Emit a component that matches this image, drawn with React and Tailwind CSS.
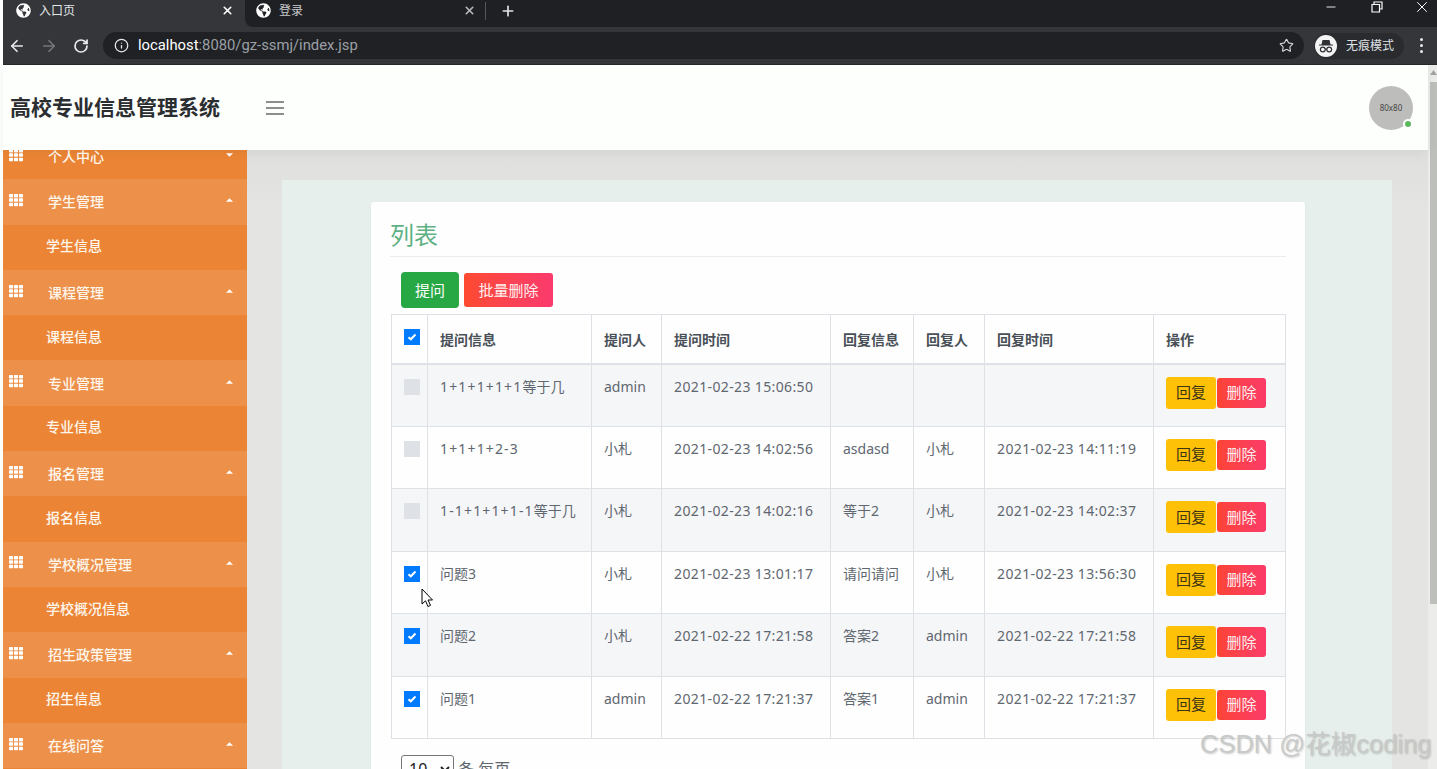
import React from 'react'
import { ArrowLeft, ArrowRight, RotateCw, Info, Star, X, Plus, Minus } from 'lucide-react'
import { FaGlobeAmericas, FaTh } from 'react-icons/fa'

const menus = [
    { title: "学生管理", child: "学生信息" },
    { title: "课程管理", child: "课程信息" },
    { title: "专业管理", child: "专业信息" },
    { title: "报名管理", child: "报名信息" },
    { title: "学校概况管理", child: "学校概况信息" },
    { title: "招生政策管理", child: "招生信息" },
    { title: "在线问答", child: "问答信息" },
]

const rows = [
    { checked: false, sum: "1+1+1+1+1", q: "等于几", by: "admin", time: "2021-02-23 15:06:50", a: "", ans: "", atime: "" },
    { checked: false, sum: "1+1+1+2-3", q: "", by: "小札", time: "2021-02-23 14:02:56", a: "asdasd", ans: "小札", atime: "2021-02-23 14:11:19" },
    { checked: false, sum: "1-1+1+1+1-1", q: "等于几", by: "小札", time: "2021-02-23 14:02:16", a: "等于2", ans: "小札", atime: "2021-02-23 14:02:37" },
    { checked: true, sum: "", q: "问题3", by: "小札", time: "2021-02-23 13:01:17", a: "请问请问", ans: "小札", atime: "2021-02-23 13:56:30" },
    { checked: true, sum: "", q: "问题2", by: "小札", time: "2021-02-22 17:21:58", a: "答案2", ans: "admin", atime: "2021-02-22 17:21:58" },
    { checked: true, sum: "", q: "问题1", by: "admin", time: "2021-02-22 17:21:37", a: "答案1", ans: "admin", atime: "2021-02-22 17:21:37" },
]

const Check = ({ checked }) => (
    <div className={`w-[16px] h-[16px] flex items-center justify-center ${checked ? "bg-[#007bff]" : "bg-[#dee2e6]"}`}>
        {checked ? (
            <svg width="10" height="8" viewBox="0 0 10 8">
                <path d="M1.5 4.2 L3.8 6.3 L8.5 1.5" fill="none" stroke="white" strokeWidth="2" />
            </svg>
        ) : null}
    </div>
)

const Caret = ({ down }) => (
    <svg width="7" height="4" viewBox="0 0 8 4" className="ml-auto mr-[14px] mb-[3px]">
        <polygon points={down ? "0,0 8,0 4,4" : "0,4 8,4 4,0"} fill="white" />
    </svg>
)

const MenuTitle = ({ title, light, down }) => (
    <div className={`h-[45.3px] flex items-center pl-[6px] text-[14px] font-medium text-[#fff6ec] ${light ? "bg-[#ec904a]" : "bg-[#eb8535]"}`}>
        <FaTh className="text-white text-[14px] w-[14px] mb-[4px]" />
        <span className="ml-[25px]">{title}</span>
        <Caret down={down} />
    </div>
)

const Sidebar = () => (
    <div className="w-[244px] shrink-0 overflow-hidden h-full">
        <div className="-mt-[16px]">
            <MenuTitle title="个人中心" down />
            {menus.map((m) => (
                <div key={m.title}>
                    <MenuTitle title={m.title} light />
                    <div className="h-[45.3px] flex items-center pl-[43px] pb-[3px] text-[14px] font-medium text-[#fff6ec] bg-[#eb8535]">{m.child}</div>
                </div>
            ))}
        </div>
    </div>
)

const Th = ({ children }) => (
    <th className="border border-[#dee2e6] border-b-[2px] px-[12px] pt-[2px] align-middle text-left text-[14px] font-bold text-[#495057]">{children}</th>
)

const Td = ({ children }) => (
    <td className="border border-[#dee2e6] px-[12px] pt-[11px] align-top text-[14px] text-[#5f6770] whitespace-nowrap">{children}</td>
)

const Time = ({ value }) => <span className="tracking-[0.37px]">{value}</span>

const Table = () => (
    <table className="table-fixed border-collapse w-[894px] ml-[1px]">
        <colgroup>
            <col className="w-[36px]" />
            <col className="w-[164px]" />
            <col className="w-[70px]" />
            <col className="w-[169px]" />
            <col className="w-[83px]" />
            <col className="w-[71px]" />
            <col className="w-[169px]" />
            <col className="w-[132px]" />
        </colgroup>
        <thead>
            <tr className="h-[49px]">
                <th className="border border-[#dee2e6] border-b-[2px] align-top pt-[14px] pl-[12px]"><Check checked /></th>
                <Th>提问信息</Th>
                <Th>提问人</Th>
                <Th>提问时间</Th>
                <Th>回复信息</Th>
                <Th>回复人</Th>
                <Th>回复时间</Th>
                <Th>操作</Th>
            </tr>
        </thead>
        <tbody>
            {rows.map((r, i) => (
                <tr key={r.time} className={`h-[62.5px] ${i % 2 === 0 ? "bg-[#f5f6f8]" : ""}`}>
                    <td className="border border-[#dee2e6] align-top pt-[14px] pl-[12px]"><Check checked={r.checked} /></td>
                    <Td><span className="tracking-[1.15px]">{r.sum}</span>{r.q}</Td>
                    <Td>{r.by}</Td>
                    <Td><Time value={r.time} /></Td>
                    <Td>{r.a}</Td>
                    <Td>{r.ans}</Td>
                    <Td><Time value={r.atime} /></Td>
                    <td className="border border-[#dee2e6] pl-[12px] align-top pt-[12px]">
                        <div className="flex items-center gap-[1px]">
                            <button className="w-[50px] h-[32px] rounded-[3px] bg-[#ffc107] text-[15px] text-[#3d3415]">回复</button>
                            <button className="w-[49px] h-[30px] rounded-[3px] bg-gradient-to-r from-[#fd4433] to-[#fb3b68] text-[15px] text-[#ffeef0]">删除</button>
                        </div>
                    </td>
                </tr>
            ))}
        </tbody>
    </table>
)

const Incognito = () => (
    <svg width="22" height="22" viewBox="0 0 22 22">
        <circle cx="11" cy="11" r="11" fill="#f4f4f4" />
        <path d="M7.5 5 H14.5 L15.5 9.5 H18 V10.5 H4 V9.5 H6.5 Z" fill="#303134" />
        <circle cx="7.8" cy="14.5" r="2.4" fill="none" stroke="#303134" strokeWidth="1.2" />
        <circle cx="14.2" cy="14.5" r="2.4" fill="none" stroke="#303134" strokeWidth="1.2" />
        <path d="M10 14 H12" stroke="#303134" strokeWidth="1.2" />
    </svg>
)

const BrowserBar = () => (
    <div className="shrink-0 font-['Roboto','Noto_Sans_CJK_SC',sans-serif]">
        <div className="h-[27px] bg-[#35363a] flex items-center text-[12px] text-[#e3e4e6]">
            <div className="w-[242px] h-full flex items-center pl-[13px] pr-[9px] pb-[6px]">
                <FaGlobeAmericas className="text-white text-[15px]" />
                <span className="ml-[8px]">入口页</span>
                <X size={13} strokeWidth={3} className="ml-[146px] text-white" />
            </div>
            <div className="flex-1 h-full flex items-center bg-[#1f2024] rounded-bl-[8px] pb-[6px]">
                <div className="w-[240px] flex items-center pl-[11px] pr-[9px] text-[#c9cacc]">
                    <FaGlobeAmericas className="text-white text-[15px]" />
                    <span className="ml-[8px]">登录</span>
                    <X size={13} strokeWidth={3} className="ml-auto text-[#b8b9bb]" />
                </div>
                <div className="w-px h-[18px] bg-[#55565a]" />
                <Plus size={16} strokeWidth={2.5} className="ml-[14px] text-[#e3e4e6]" />
                <div className="ml-auto flex items-center text-white pb-[7px]">
                    <Minus size={14} strokeWidth={1.5} />
                    <svg width="12" height="12" viewBox="0 0 12 12" className="ml-[33px]">
                        <path d="M3 3 V1 H11 V8 H9 M1 3.5 H8.5 V11 H1 Z" fill="none" stroke="white" strokeWidth="1.2" />
                    </svg>
                    <X size={18} strokeWidth={1.3} className="ml-[30px] mr-[6px]" />
                </div>
            </div>
        </div>
        <div className="h-[38px] bg-[#35363a] flex items-center border-b border-[#28292c]">
            <ArrowLeft size={18} strokeWidth={2.2} className="ml-[5px] text-[#e8eaed]" />
            <ArrowRight size={18} strokeWidth={2.2} className="ml-[14px] text-[#75777b]" />
            <RotateCw size={16} strokeWidth={2.6} className="ml-[15px] text-[#e8eaed]" />
            <div className="ml-[14px] w-[1201px] h-[27px] rounded-full bg-[#202124] flex items-center pl-[11px] pr-[10px]">
                <Info size={15} className="text-[#e8eaed]" />
                <span className="ml-[9px] text-[14.8px] text-white">localhost<span className="text-[#9aa0a6]">:8080/gz-ssmj/index.jsp</span></span>
                <Star size={15} strokeWidth={1.8} className="ml-auto text-[#d5d7da]" />
            </div>
            <div className="ml-[10px] w-[90px] h-[26px] rounded-full bg-[#2a2b2f] flex items-center pl-[1px]">
                <Incognito />
                <span className="ml-[9px] text-[12px] text-[#dfe1e4]">无痕模式</span>
            </div>
            <div className="ml-[16px] flex flex-col gap-[3px]">
                <div className="w-[3px] h-[3px] rounded-full bg-[#e8eaed]" />
                <div className="w-[3px] h-[3px] rounded-full bg-[#e8eaed]" />
                <div className="w-[3px] h-[3px] rounded-full bg-[#e8eaed]" />
            </div>
        </div>
    </div>
)

const Header = () => (
    <div className="relative z-10 h-[85px] shrink-0 bg-[#fdfffc] flex items-center pl-[7px] pr-[15px] shadow-[0_2px_12px_rgba(0,0,0,0.06)]">
        <h1 className="text-[21px] font-bold text-[#2b2e31]">高校专业信息管理系统</h1>
        <div className="ml-[46px] flex flex-col gap-[4px]">
            <div className="w-[18px] h-[2px] bg-[#8b8d8e]" />
            <div className="w-[18px] h-[2px] bg-[#8b8d8e]" />
            <div className="w-[18px] h-[2px] bg-[#8b8d8e]" />
        </div>
        <div className="relative ml-auto w-[44px] h-[44px] rounded-full bg-[#bdbebb] flex items-center justify-center text-[8px] text-[#444]">
            80x80
            <div className="absolute right-[0px] bottom-[1px] w-[10px] h-[10px] rounded-full bg-[#5cb85c] border-2 border-white" />
        </div>
    </div>
)

const App = () => {
    return (
        <div className="relative h-[769px] w-[1437px] overflow-hidden bg-white flex flex-col pl-[3px] font-['Noto_Sans','Noto_Sans_CJK_SC',sans-serif]">
            <BrowserBar />
            <div className="flex-1 min-h-0 flex">
                <div className="flex-1 min-w-0 flex flex-col">
                    <Header />
                    <div className="flex-1 min-h-0 flex">
                        <Sidebar />
                        <div className="flex-1 min-w-0 bg-gradient-to-b from-[#dfe0dd] to-[#e4e5e2] to-[60px] pt-[30px] pl-[35px]">
                            <div className="w-[1110px] h-[700px] bg-[#e6efeb] pt-[22px] pl-[89px]">
                                <div className="w-[934px] h-[700px] bg-[#fdfefd] rounded-[3px] px-[19px] pt-[16px] shadow-[0_1px_3px_rgba(0,0,0,0.04)]">
                                    <h2 className="h-[39px] text-[24px] leading-[34px] text-[#5fb184] border-b border-[#e9ecef]">列表</h2>
                                    <div className="flex items-center mt-[15px] ml-[11px] gap-[5px]">
                                        <button className="w-[58px] h-[36px] rounded-[4px] bg-[#28a745] text-[15px] text-white">提问</button>
                                        <button className="w-[89px] h-[34px] rounded-[3px] bg-gradient-to-r from-[#fd4a2e] to-[#fb3a6c] text-[15px] text-[#fff1ee]">批量删除</button>
                                    </div>
                                    <div className="mt-[6px]"><Table /></div>
                                    <div className="flex items-center mt-[16px] ml-[11px] text-[16px] text-[#5f6770]">
                                        <select className="w-[53px] h-[28px] border border-[#767676] rounded-[3px] text-[#222] pl-[3px]" defaultValue="10">
                                            <option>10</option>
                                        </select>
                                        <span className="ml-[4px]">条 每页</span>
                                    </div>
                                </div>
                            </div>
                        </div>
                    </div>
                </div>
                <div className="w-[9px] shrink-0 bg-[#ecedeb] pl-[2px]">
                    <svg width="7" height="5" viewBox="0 0 7 5" className="mt-[5px]"><polygon points="0,5 7,5 3.5,0" fill="#a3a3a3" /></svg>
                    <div className="mt-[7px] h-[522px] bg-[#bcbfba]" />
                </div>
            </div>
            <div className="absolute left-[1200px] top-[725px] text-[25.5px] text-[#c8caca] font-['Liberation_Sans','Noto_Sans_CJK_SC',sans-serif] [text-shadow:1px_1px_2px_rgba(0,0,0,0.2)] whitespace-nowrap">CSDN @花椒coding</div>
            <svg width="14" height="21" viewBox="0 0 14 21" className="absolute left-[421px] top-[588px]">
                <path d="M1 1 V16 L4.5 12.8 L7 18.5 L9.5 17.4 L7 12 H11.5 Z" fill="white" stroke="black" strokeWidth="1" />
            </svg>
        </div>
    )
}

export default App
